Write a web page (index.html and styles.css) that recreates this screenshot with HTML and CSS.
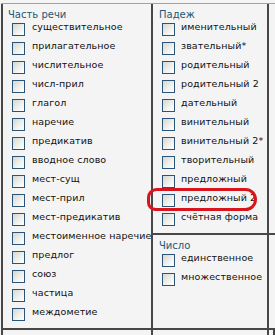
FILE: index.html
```html
<!DOCTYPE html>
<html lang="ru">
<head>
    <meta charset="UTF-8">
    <title>Грамматические признаки</title>
    <link rel="stylesheet" href="styles.css">
</head>
<body>
    <div class="form">
        <!-- Часть речи -->
        <div class="cell pos">
            <div class="group-title">Часть речи</div>
            <label class="item"><span class="box"></span><span>существительное</span></label>
            <label class="item"><span class="box"></span><span>прилагательное</span></label>
            <label class="item"><span class="box"></span><span>числительное</span></label>
            <label class="item"><span class="box"></span><span>числ-прил</span></label>
            <label class="item"><span class="box"></span><span>глагол</span></label>
            <label class="item"><span class="box"></span><span>наречие</span></label>
            <label class="item"><span class="box"></span><span>предикатив</span></label>
            <label class="item"><span class="box"></span><span>вводное слово</span></label>
            <label class="item"><span class="box"></span><span>мест-сущ</span></label>
            <label class="item"><span class="box"></span><span>мест-прил</span></label>
            <label class="item"><span class="box"></span><span>мест-предикатив</span></label>
            <label class="item"><span class="box"></span><span>местоименное наречие</span></label>
            <label class="item"><span class="box"></span><span>предлог</span></label>
            <label class="item"><span class="box"></span><span>союз</span></label>
            <label class="item"><span class="box"></span><span>частица</span></label>
            <label class="item"><span class="box"></span><span>междометие</span></label>
        </div>

        <!-- Падеж -->
        <div class="cell case">
            <div class="group-title">Падеж</div>
            <label class="item"><span class="box"></span><span>именительный</span></label>
            <label class="item"><span class="box"></span><span>звательный*</span></label>
            <label class="item"><span class="box"></span><span>родительный</span></label>
            <label class="item"><span class="box"></span><span>родительный 2</span></label>
            <label class="item"><span class="box"></span><span>дательный</span></label>
            <label class="item"><span class="box"></span><span>винительный</span></label>
            <label class="item"><span class="box"></span><span>винительный 2*</span></label>
            <label class="item"><span class="box"></span><span>творительный</span></label>
            <label class="item"><span class="box"></span><span>предложный</span></label>
            <label class="item"><span class="box"></span><span>предложный 2</span></label>
            <label class="item"><span class="box"></span><span>счётная форма</span></label>
        </div>
        <div class="cell side"></div>

        <!-- Число -->
        <div class="cell number">
            <div class="group-title">Число</div>
            <label class="item"><span class="box"></span><span>единственное</span></label>
            <label class="item"><span class="box"></span><span>множественное</span></label>
        </div>
        <div class="cell side"></div>

        <div class="cell next first"></div>
        <div class="cell next"></div>
        <div class="cell next"></div>
    </div>

    <!-- red mark drawn over the screenshot -->
    <div class="highlight"></div>
</body>
</html>
```

FILE: styles.css
```css
/* Page */
body {
    margin: 0;
    padding: 0 0 0 1px;
    background-color: #f4f4f4;
    font-family: 'DejaVu Sans', Verdana, sans-serif;
    font-size: 10px;
    color: #111;
    height: 335px;
    overflow: hidden;
    position: relative;
}

/* Table grid */
.form {
    margin-top: 3px;
    border-top: 1px solid #a3a3a3;
    display: grid;
    grid-template-columns: 152px 116px 1fr;
    grid-template-rows: 231px 95px 20px;
}

.cell {
    border-right: 2px solid #474747;
    border-bottom: 2px solid #474747;
    box-sizing: border-box;
}

.pos {
    grid-row: 1 / 3;
    border-left: 2px solid #474747;
    padding: 5px 0 0 9px;
}

.case {
    padding: 5px 0 0 9px;
}

.number {
    padding: 5px 0 0 9px;
}

.side {
    border-right: none;
}

.next {
    border-bottom: none;
}

.next.first {
    border-left: 2px solid #474747;
}

/* Group heading */
.group-title {
    font-family: 'DejaVu Sans', Tahoma, sans-serif;
    font-size: 10px;
    line-height: 12px;
    color: #1b5877;
    margin-left: -4px;
}

.case .group-title,
.number .group-title {
    margin-left: -3px;
}

/* Checkbox rows */
.item {
    display: flex;
    align-items: flex-start;
    height: 19px;
    white-space: nowrap;
    font-size: 9.5px;
    letter-spacing: 0.1px;
    line-height: 13px;
}

.item span:last-child {
    margin-top: -1px;
}

.box {
    flex: none;
    width: 11px;
    height: 11px;
    margin: 2px 7px 0 0;
    border: 1px solid #2a5478;
    background: linear-gradient(135deg, #d7d7d1, #f2f2ee 60%, #ffffff);
}

.case .box,
.number .box {
    margin-right: 6px;
}

/* Red hand-drawn oval */
.highlight {
    position: absolute;
    left: 147px;
    top: 188px;
    width: 104px;
    height: 17px;
    border: 3px solid #d8151c;
    border-radius: 10px 12px 12px 9px;
}
```
